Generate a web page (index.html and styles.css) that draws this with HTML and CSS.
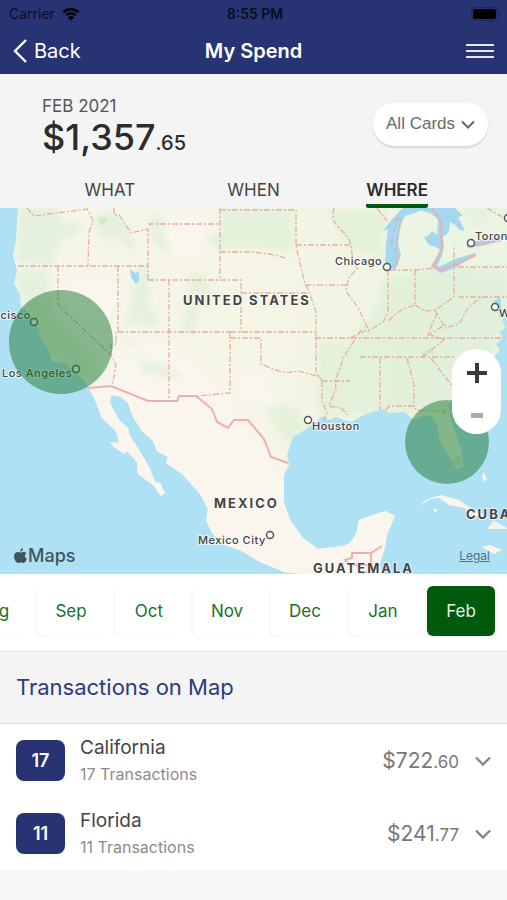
FILE: index.html
```html
<!DOCTYPE html>
<html lang="en">
<head>
    <meta charset="UTF-8">
    <meta name="viewport" content="width=device-width, initial-scale=1.0">
    <title>My Spend</title>
    <link rel="stylesheet" href="styles.css">
</head>
<body>
    <header class="topbar">
        <div class="status-bar">
            <div class="carrier">
                <span>Carrier</span>
                <svg width="18" height="14" viewBox="0 0 18 14" aria-hidden="true">
                    <path d="M1.5 5.2a11 11 0 0 1 15 0" fill="none" stroke="#000" stroke-width="2.6"/>
                    <path d="M4.3 8.2a7 7 0 0 1 9.4 0" fill="none" stroke="#000" stroke-width="2.4"/>
                    <path d="M9 13.6 5.8 10.4a4.6 4.6 0 0 1 6.4 0z"/>
                </svg>
            </div>
            <span class="time">8:55 PM</span>
            <svg class="battery" width="30" height="14" viewBox="0 0 30 14" aria-hidden="true">
                <rect x="0.5" y="0.5" width="26" height="13" rx="4" fill="none" stroke="#1c2558"/>
                <rect x="2" y="2" width="23" height="10" rx="2.5"/>
                <path d="M28 5v4c1.6-.6 1.6-3.4 0-4z" fill="#1c2558"/>
            </svg>
        </div>
        <nav class="nav-bar">
            <a href="#" class="back">
                <svg width="14" height="24" viewBox="0 0 14 24" aria-hidden="true">
                    <path d="M13 1 2 12l11 11" fill="none" stroke="#fff" stroke-width="2.4"/>
                </svg>
                Back
            </a>
            <h1>My Spend</h1>
            <button class="menu-btn" aria-label="Menu">
                <svg width="28" height="16" viewBox="0 0 28 16" aria-hidden="true">
                    <path d="M0 2h28M0 8h28M0 14h28" stroke="#e4e6f2" stroke-width="2"/>
                </svg>
            </button>
        </nav>
    </header>

    <section class="summary">
        <div class="summary-row">
            <div>
                <div class="period">FEB 2021</div>
                <div class="total">$1,357<small>.65</small></div>
            </div>
            <button class="card-filter">
                All Cards
                <svg width="14" height="9" viewBox="0 0 14 9" aria-hidden="true">
                    <path d="m1 1.5 6 6 6-6" fill="none" stroke="#666" stroke-width="2"/>
                </svg>
            </button>
        </div>
        <div class="tabs" role="tablist">
            <button role="tab" aria-selected="false">WHAT</button>
            <button role="tab" aria-selected="false">WHEN</button>
            <button role="tab" aria-selected="true" class="active">WHERE</button>
        </div>
    </section>

    <section class="map">
        <svg class="map-canvas" viewBox="0 208 507 366" role="img" aria-label="Map of spending">
            <defs>
                <linearGradient id="land" x1="0" y1="0" x2="1" y2="0">
                    <stop offset="0" stop-color="#f6f5ea"/>
                    <stop offset="0.5" stop-color="#f5f5e5"/>
                    <stop offset="1" stop-color="#e9f4e1"/>
                </linearGradient>
                <filter id="soft"><feGaussianBlur stdDeviation="3"/></filter>
                <filter id="softer" x="-20%" y="-20%" width="140%" height="140%"><feGaussianBlur stdDeviation="9"/></filter>
                <path id="mainland" d="M18 208 16 240 13 256 17 270 14 284 20 294 21 306 29 313 33 322 40 332 39 336 48 348 52 361 65 363 73 369 83 379 88 386 95 400 102 418 116 431 119 443 110 442 114 447 124 454 127 451 137 462 138 474 153 485 161 496 165 493 160 483 155 482 151 471 143 456 130 436 128 428 120 421 114 411 110 403 111 395 121 397 128 403 133 417 142 431 153 441 157 451 168 457 166 463 182 474 200 494 208 509 206 520 212 533 225 545 242 551 258 561 284 572 300 574 381 574 380 562 385 548 387 535 395 516 385 511 370 516 359 520 356 534 350 543 343 546 318 549 303 538 290 520 284 502 284 475 289 465 287 455 293 437 303 431 315 423 322 416 330 420 335 417 351 422 358 418 362 416 372 412 384 409 389 413 405 412 413 420 420 417 430 415 437 425 440 442 448 455 457 469 463 467 462 452 455 431 450 417 448 404 458 394 472 382 485 371 493 358 500 350 496 344 503 338 499 332 505 328 502 320 507 315V208z"/>
                <clipPath id="land-clip"><use href="#mainland"/></clipPath>
            </defs>
            <rect y="208" width="507" height="366" fill="#aee1f4"/>
            <use href="#mainland" fill="url(#land)"/>

            <g clip-path="url(#land-clip)">
                <g fill="#faf6ee" filter="url(#softer)">
                    <path d="m62 275 54-4 2 55-52-10zM150 215h60v48l-50-8zM118 345l50-4 60 50-106 2z"/>
                    <path d="M80 385h135l50 60 20 30 110 30v70H200l-60-80-60-60zM230 370l40 2 10 50-40-20z"/>
                </g>
                <!-- forests and plains -->
                <g fill="#dcefd6" filter="url(#soft)" opacity="0.65">
                    <path d="M18 208h40l6 16 18-4-4 14-18 8-8 24-36-4z"/>
                    <path d="M14 270h34l4 40 10 14 24 22 16 30-8 6-30-12-36-36z"/>
                    <path d="m100 212 22 4 14 30-6 4-16-14-8 6-14-20zM152 214l14 4-2 16 8 20-12-4-12-18z"/>
                    <path d="m140 262 10 14-2 30 12 12-10 12-10-10-14 8zM190 274l14-2 4 16 14 8-24 14-4 26-12-4 4-28z"/>
                    <path d="m122 338 18 2-8 6zM135 352l12 10 16 2 16 10 4 8-18-6-22-4zM206 238l14-4v16l-8-4z"/>
                    <path d="m222 208 72 2v40l-74-2zM330 210h56l-4 30 4 20-38-14z"/>
                    <path d="m384 280 60-16 63 10v60l-80 30-90-6 40-50z"/>
                    <path d="M318 342h180l-50 70-128 4zM262 408l26-4 20 20-18 22z"/>
                    <path d="m470 208 20 2-10 12z"/>
                </g>
                <g fill="#c9e7c4" opacity="0.7">
                    <path d="m98 218 8-1 2 5-8 3zM422 352l8-4 5 4-10 4-4 2zM453 460l6 7 3-3-2-10z"/>
                </g>
            </g>

            <!-- lakes and islands -->
            <g fill="#a4d8f1">
                <path d="m130 269 5 4 4-1v8l-3 4-5-7z"/>
                <path d="M403 208 392 219l-9 12 5-2-2 16-1 17 3 6 8 1 5-14-3-11 2-17 5-11 10-3 10-5z"/>
                <path d="m413 208 17 5 8 6-1 16-5-4-4 5-4 1 5 8 7 2 4 3-3 6-6 10 5 2 6-12 2-9-1-10 6-5 1-10 5 3 5 5 5 1-7-14 5-1-8-8z"/>
                <path d="m431 267 10 6 14-5 21-14-1-1-20 6-14 7zM467 245l12-5 23-4-2 5-18 5-15 2z"/>
                <path d="m494 301 3 7 3 10 3-2-2-10-1-9z"/>
            </g>
            <g fill="#f8f5eb">
                <path d="m419 507 8-8 14-4 18 5 13 9 14 7 21 12v1h-20l8-10-26-4-4-7-16-3-10-7-9 1zM481 547l9-2 12 5-8 4zM484 472l3 8-4 1-1-5zM433 508l5 2-3 3z"/>
            </g>

            <!-- state lines -->
            <g class="borders">
                <path d="m27 208 7 8 53-7 6 11-4 13-1 33M18 266h131M58 266v39l53 50 5 10-4 22M118 266v66h-2v12h-5v11M114 208v7h5l12 18 17-4v51M148 224h72M148 280h93v52M220 208v72M220 210h32M169 280v121M118 332h112M220 252h32l18 2 16 4M241 293h68M230 332v61l-33 3"/>
                <path d="M252 210h44v36l8 34 6 14 6 18v60l6 9M296 245h55M334 208c-2 7-2 12 4 19 4 5 10 7 13 18l2 17 5 6-9 9-3 14 13 18 11 25M305 285h42M230 332h85M230 338h31v26c11 5 24 11 37 7l23 6M315 338h192M388 270v41l-4 10-14 9-5 1-15 7M390 270h26l19-2M415 270v35l-14 5-13 11M415 305l10 6 10-1 19-13v-52M437 313l-9 21 15 5"/>
                <path d="m435 310 10 18 14-4 9-16 13-11M458 267h49M458 297h49M427 336l19-12M445 339l-23 18M360 357h95M361 330l-18 28c-2 12-9 18-7 30l-7 18 12 2 8 8M322 381h28M322 381v20l5 12-3 8M380 358v52M407 358l7 27v22M431 358l24 32M386 410l3-4h25l2 4 28 2 3-4M377 208l10 13M391 245l6-27 4 1-5 30 1 16M487 208l20 12"/>
            </g>
            <g class="country-borders">
                <path d="M88 388 111 386 148 401 177 401 179 396 196 396 212 409 217 422 228 428 234 420 248 420 264 439 271 457 288 463"/>
                <path d="m432 208 9 14 1 27-9 17 8 4 14-5 21-10M473 245l29-5M382 546l-11 7v17M371 553h-19v5l-7 2 5 5h21M371 570l-10 4"/>
            </g>

            <!-- cities -->
            <g class="city-dots">
                <circle cx="34" cy="322" r="3.5"/>
                <circle cx="76" cy="369" r="3.5"/>
                <circle cx="387" cy="267" r="3.5"/>
                <circle cx="471" cy="243" r="3.5"/>
                <circle cx="495" cy="307" r="3.5"/>
                <circle cx="308" cy="420" r="3.5"/>
                <circle cx="270" cy="535" r="3.5"/>
                <circle cx="508" cy="218" r="3.5"/>
            </g>
            <g class="cities">
                <text x="31" y="319" text-anchor="end">San Francisco</text>
                <text x="2" y="377">Los Angeles</text>
                <text x="335" y="265">Chicago</text>
                <text x="475" y="240">Toronto</text>
                <text x="499" y="317">Washington</text>
                <text x="312" y="430">Houston</text>
                <text x="198" y="544">Mexico City</text>
            </g>
            <g class="countries">
                <text x="183" y="305">UNITED STATES</text>
                <text x="214" y="508">MEXICO</text>
                <text x="466" y="519">CUBA</text>
                <text x="313" y="573">GUATEMALA</text>
            </g>

            <!-- spend bubbles -->
            <circle class="bubble" cx="61" cy="342" r="52"/>
            <circle class="bubble" cx="447" cy="442" r="42"/>
        </svg>
        <div class="zoom-control">
            <button aria-label="Zoom in">
                <svg width="20" height="20" viewBox="0 0 20 20" aria-hidden="true"><path d="M10 0v20M0 10h20" stroke="#3a3a3a" stroke-width="4"/></svg>
            </button>
            <button aria-label="Zoom out">
                <svg width="12" height="5" viewBox="0 0 12 5" aria-hidden="true"><path d="M0 2.5h12" stroke="#aaa" stroke-width="5"/></svg>
            </button>
        </div>
        <div class="map-brand">
            <svg width="13" height="16" viewBox="0 0 13 16" aria-hidden="true">
                <path d="M9 0c.2 1.9-1.200 3.600-2.800 3.700C6 2 7.400.3 9 0zM12.300 5.400C10.300 6.700 10.500 9.800 13 10.800c-.7 2-2 4.200-3.400 4.200-1 0-1.400-.6-2.600-.6s-1.700.6-2.600.6C2.600 15 0 11.600 0 8.400c0-3 1.900-4.500 3.700-4.500 1.200 0 2.100.7 3 .7.800 0 1.900-.8 3.300-.8.900 0 1.800.5 2.300 1.600z"/>
            </svg>
            <span>Maps</span>
        </div>
        <a href="#" class="legal">Legal</a>
    </section>

    <div class="months">
        <button>Aug</button>
        <button>Sep</button>
        <button>Oct</button>
        <button>Nov</button>
        <button>Dec</button>
        <button>Jan</button>
        <button class="active">Feb</button>
    </div>

    <h2>Transactions on Map</h2>

    <ul class="transactions">
        <li>
            <div class="count">17</div>
            <div class="place">
                <div class="name">California</div>
                <div class="detail">17 Transactions</div>
            </div>
            <div class="amount">$722<small>.60</small></div>
            <button class="expand" aria-label="Show California transactions">
                <svg width="16" height="10" viewBox="0 0 16 10" aria-hidden="true"><path d="m1 1.500 7 7 7-7" fill="none" stroke="#868686" stroke-width="2.400"/></svg>
            </button>
        </li>
        <li>
            <div class="count">11</div>
            <div class="place">
                <div class="name">Florida</div>
                <div class="detail">11 Transactions</div>
            </div>
            <div class="amount">$241<small>.77</small></div>
            <button class="expand" aria-label="Show Florida transactions">
                <svg width="16" height="10" viewBox="0 0 16 10" aria-hidden="true"><path d="m1 1.500 7 7 7-7" fill="none" stroke="#868686" stroke-width="2.400"/></svg>
            </button>
        </li>
    </ul>
</body>
</html>
```

FILE: styles.css
```css
* {
    box-sizing: border-box;
}
body {
    margin: 0;
    background-color: #f6f6f6;
    color: #444;
    font-family: Inter, "Liberation Sans", sans-serif;
    font-size: 17px;
    overflow-x: hidden;
}
button {
    padding: 0;
    border: none;
    background: none;
    color: inherit;
    font-family: inherit;
    font-size: 17px;
    cursor: pointer;
}
svg {
    display: block;
}
.topbar {
    background-color: #283374;
    color: #fff;
}
.status-bar {
    display: grid;
    grid-template-columns: 1fr auto 1fr;
    align-items: center;
    height: 27px;
    padding: 0 6px 0 9px;
    color: #0a0d22;
    font-size: 14px;
}
.carrier {
    display: flex;
    align-items: center;
    gap: 7px;
}
.time {
    font-weight: 600;
}
.battery {
    justify-self: end;
}
.nav-bar {
    display: grid;
    grid-template-columns: 1fr auto 1fr;
    align-items: center;
    height: 47px;
    padding: 0 13px;
}
.back {
    display: flex;
    align-items: center;
    gap: 7px;
    color: #fff;
    font-size: 20px;
    text-decoration: none;
}
h1 {
    margin: 0;
    font-size: 20px;
    font-weight: 600;
}
.menu-btn {
    justify-self: end;
}
.summary {
    background-color: #f4f4f4;
}
.summary-row {
    display: flex;
    justify-content: space-between;
    align-items: center;
    padding: 22px 19px 0 42px;
}
.period {
    color: #555;
    line-height: 20px;
}
.total {
    color: #2c2c2c;
    font-size: 36px;
    font-weight: 500;
    line-height: 42px;
}
.total small {
    font-size: 20px;
}
.card-filter {
    display: flex;
    align-items: center;
    gap: 6px;
    height: 43px;
    margin-bottom: 12px;
    padding: 0 13px;
    border-radius: 22px;
    background-color: #fff;
    box-shadow: 0 2px 2px rgba(0,0,0,0.12);
    color: #6a6a6a;
    font-family: "Liberation Sans", sans-serif;
}
.tabs {
    display: grid;
    grid-template-columns: repeat(3, 1fr);
    justify-items: center;
    padding: 8px 38px 0;
}
.tabs button {
    height: 36px;
    padding-top: 3px;
    border-bottom: 4px solid transparent;
    color: #444;
}
.tabs .active {
    border-bottom-color: #075a0d;
    border-radius: 0 0 2px 2px;
    color: #2c2c2c;
    font-weight: 600;
}
.map {
    position: relative;
}
.map-canvas {
    width: 100%;
}
.borders {
    fill: none;
    stroke: #e6aea6;
    stroke-width: 1.3;
    stroke-dasharray: 6 2 2 2;
}
.country-borders {
    fill: none;
    stroke: #eeb0ad;
    stroke-width: 2;
}
.city-dots {
    fill: #fff;
    stroke: #555;
    stroke-width: 1.5;
}
.cities,
.countries {
    fill: #444;
    stroke: rgba(255,255,255,0.7);
    stroke-width: 2;
    paint-order: stroke;
}
.cities {
    font-size: 11px;
    font-weight: 500;
    letter-spacing: 0.5px;
}
.countries {
    font-size: 13px;
    font-weight: 700;
    letter-spacing: 2px;
}
.bubble {
    fill: #1c7832;
    fill-opacity: 0.5;
}
.zoom-control {
    position: absolute;
    right: 6px;
    bottom: 140px;
    display: flex;
    flex-direction: column;
    width: 49px;
    border-radius: 25px;
    background-color: #fff;
}
.zoom-control button {
    display: flex;
    align-items: center;
    justify-content: center;
    height: 48px;
}
.zoom-control button + button {
    height: 37px;
}
.map-brand {
    position: absolute;
    left: 14px;
    bottom: 8px;
    display: flex;
    align-items: center;
    gap: 1px;
    color: #40545e;
    fill: #40545e;
    font-size: 18px;
    font-weight: 500;
}
.legal {
    position: absolute;
    right: 17px;
    bottom: 11px;
    color: #53727f;
    font-size: 12px;
}
.months {
    display: flex;
    justify-content: flex-end;
    gap: 10px;
    padding: 12px 12px 15px;
    border-bottom: 1px solid #e2e2e2;
    background-color: #fff;
}
.months button {
    flex: none;
    width: 68px;
    height: 50px;
    border-radius: 6px;
    box-shadow: -2px 1px 2px rgba(0,0,0,0.04);
    color: #17712a;
}
.months .active {
    background-color: #005a0b;
    color: #e4f0e4;
}
h2 {
    margin: 0;
    padding: 0 16px;
    border-bottom: 1px solid #ddd;
    background-color: #f4f4f4;
    color: #2f3a7d;
    font-size: 22px;
    font-weight: 400;
    line-height: 71px;
}
.transactions {
    margin: 0;
    padding: 0;
    background-color: #fff;
    list-style: none;
}
.transactions li {
    display: flex;
    align-items: center;
    height: 73px;
    padding: 0 16px;
}
.count {
    width: 49px;
    border-radius: 8px;
    background-color: #283374;
    color: #fff;
    font-size: 18px;
    font-weight: 600;
    line-height: 41px;
    text-align: center;
}
.place {
    flex: 1;
    margin-left: 15px;
}
.name {
    font-size: 19px;
    line-height: 26px;
}
.detail {
    color: #8c8c8c;
    font-size: 16px;
    line-height: 26px;
}
.amount {
    color: #777;
    font-size: 21px;
}
.amount small {
    font-size: 17px;
}
.expand {
    margin-left: 16px;
}
```
